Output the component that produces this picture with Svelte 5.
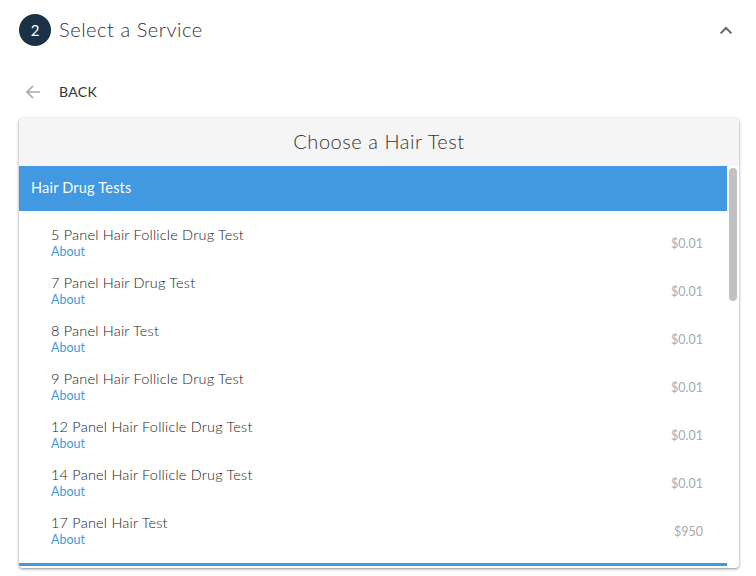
<script>
  const tests = [
    { name: '5 Panel Hair Follicle Drug Test', price: '$0.01' },
    { name: '7 Panel Hair Drug Test', price: '$0.01' },
    { name: '8 Panel Hair Test', price: '$0.01' },
    { name: '9 Panel Hair Follicle Drug Test', price: '$0.01' },
    { name: '12 Panel Hair Follicle Drug Test', price: '$0.01' },
    { name: '14 Panel Hair Follicle Drug Test', price: '$0.01' },
    { name: '17 Panel Hair Test', price: '$950' },
  ];
</script>

<div class="page">
  <header class="step">
    <span class="step-num">2</span>
    <span class="step-title">Select a Service</span>
    <svg class="chevron" width="24" height="24" viewBox="0 0 24 24">
      <path d="M6.6 15.4 12 10l5.4 5.4" fill="none" stroke="#666" stroke-width="2" />
    </svg>
  </header>

  <div class="back">
    <svg width="24" height="24" viewBox="0 0 24 24">
      <path d="M19 12H6M12 6l-6 6 6 6" fill="none" stroke="#aaa" stroke-width="1.7" />
    </svg>
    <span>BACK</span>
  </div>

  <section class="card">
    <h2 class="card-title">Choose a Hair Test</h2>
    <div class="panel">
      <div class="scroller">
        <div class="group-head">Hair Drug Tests</div>
        <ul class="rows">
          {#each tests as t}
            <li class="row">
              <div class="row-main">
                <span class="row-name">{t.name}</span>
                <span class="row-about">About</span>
              </div>
              <span class="row-price">{t.price}</span>
            </li>
          {/each}
        </ul>
        <div class="group-head"></div>
      </div>
      <div class="track"><div class="thumb"></div></div>
    </div>
  </section>
</div>

<style>
  :global(body) {
    margin: 0;
    background: #fff;
  }

  .page {
    width: 756px;
    height: 576px;
    overflow: hidden;
    font-family: Lato, "Liberation Sans", sans-serif;
    color: #333;
  }

  .step {
    display: flex;
    align-items: center;
    height: 30px;
    padding: 15px 18px 0 19px;
  }

  .step-num {
    width: 32px;
    height: 32px;
    border-radius: 50%;
    background: #1b3145;
    color: #fff;
    font-size: 15px;
    font-weight: 400;
    display: flex;
    align-items: center;
    justify-content: center;
  }

  .step-title {
    flex: 1;
    margin: -2px 0 0 8px;
    font-size: 20px;
    font-weight: 300;
    letter-spacing: 0.55px;
    color: #333;
  }

  .back {
    display: flex;
    align-items: center;
    gap: 14px;
    height: 36px;
    margin-top: 28px;
    padding-left: 21px;
    font-size: 14px;
    letter-spacing: 0.35px;
    color: #333;
  }

  .back svg {
    margin-top: 2px;
  }

  .card {
    width: 720px;
    height: 450px;
    margin: 9px 0 0 19px;
    border-radius: 4px;
    box-shadow: 0 1px 3px rgba(0, 0, 0, 0.45);
    overflow: hidden;
    background: #fff;
  }

  .card-title {
    margin: 0;
    height: 48px;
    line-height: 46px;
    background: #f5f5f5;
    text-align: center;
    font-size: 20px;
    font-weight: 300;
    letter-spacing: 0.55px;
    color: #333;
  }

  .panel {
    display: flex;
    height: 400px;
  }

  .scroller {
    width: 708px;
    overflow: hidden;
  }

  .track {
    width: 12px;
    padding: 2px 2px 0;
    box-sizing: border-box;
  }

  .thumb {
    height: 133px;
    border-radius: 4px;
    background: #c1c1c1;
  }

  .group-head {
    height: 45px;
    line-height: 44px;
    padding-left: 12px;
    background: #4299e1;
    color: #fff;
    font-size: 14.5px;
    font-weight: 400;
    letter-spacing: 0.2px;
  }

  .rows {
    list-style: none;
    margin: 0;
    padding: 8px 24px 8px 33px;
  }

  .row {
    height: 48px;
    display: flex;
    align-items: center;
    justify-content: space-between;
  }

  .row-main {
    display: flex;
    flex-direction: column;
    margin-left: -1px;
  }

  .row-name {
    font-size: 14.5px;
    line-height: 17px;
    margin-top: -1px;
    margin-bottom: 1px;
    font-weight: 300;
    letter-spacing: 0.2px;
    color: #222;
  }

  .row-about {
    font-size: 12.5px;
    line-height: 16px;
    color: #4299e1;
  }

  .row-price {
    font-size: 12.5px;
    color: #aaa;
  }

  .chevron {
    flex-shrink: 0;
    margin-top: -1px;
  }
</style>
